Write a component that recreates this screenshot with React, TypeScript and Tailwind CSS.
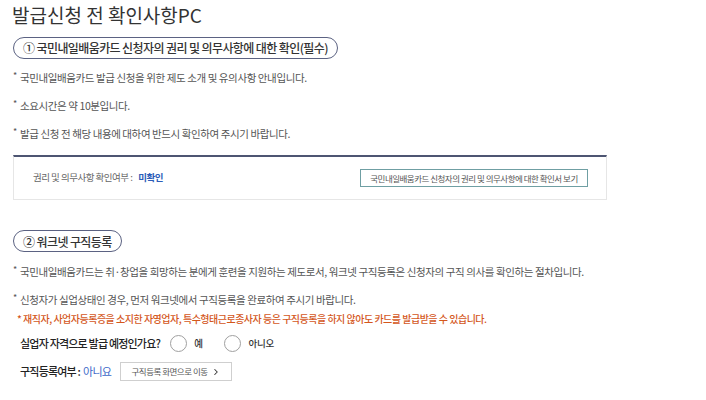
import { ChevronRight } from 'lucide-react';

const font = { fontFamily: '"Noto Sans CJK KR", "Noto Sans", sans-serif' };

const Pill = ({ children }: { children: string }) => (
  <div className="inline-flex items-center h-[22px] px-[9px] rounded-full border-[1.5px] border-[#5b6282] text-[12px] tracking-[-0.6px] leading-[19px] font-medium text-[#333]">
    {children}
  </div>
);

const Bullet = ({ children }: { children: string }) => (
  <div className="flex items-start text-[10.5px] tracking-[-0.4px] leading-[17px] text-[#555]">
    <span className="w-[7px] text-[9px] leading-[14px]">*</span>
    <span>{children}</span>
  </div>
);

export default function App() {
  return (
    <div className="w-[706px] h-[400px] bg-white overflow-hidden px-[13px]" style={font}>
      <h1 className="pt-[3px] text-[19px] leading-[24px] text-[#333] font-normal -ml-[1px]">발급신청 전 확인사항PC</h1>

      <div className="mt-[7px]">
        <Pill>① 국민내일배움카드 신청자의 권리 및 의무사항에 대한 확인(필수)</Pill>
      </div>
      <div className="mt-[10px] flex flex-col gap-[11px]">
        <Bullet>국민내일배움카드 발급 신청을 위한 제도 소개 및 유의사항 안내입니다.</Bullet>
        <Bullet>소요시간은 약 10분입니다.</Bullet>
        <Bullet>발급 신청 전 해당 내용에 대하여 반드시 확인하여 주시기 바랍니다.</Bullet>
      </div>

      <div className="mt-[13px] w-[594px] h-[45px] border border-[#e6e6e6] border-t-2 border-t-[#4d5572] flex items-center pl-[19px] pr-[18px] justify-between">
        <div className="text-[9.5px] tracking-[-0.5px] text-[#666] flex items-center">
          <span>권리 및 의무사항 확인여부 :</span>
          <span className="ml-[6px] font-bold text-[#2c5cb8]">미확인</span>
        </div>
        <button className="h-[18px] w-[228px] border border-[#6f9fa3] text-[8.5px] tracking-[-0.5px] leading-[14px] text-[#555] bg-white">
          국민내일배움카드 신청자의 권리 및 의무사항에 대한 확인서 보기
        </button>
      </div>

      <div className="mt-[28px]">
        <Pill>② 워크넷 구직등록</Pill>
      </div>
      <div className="mt-[11px] flex flex-col gap-[11px]">
        <Bullet>국민내일배움카드는 취·창업을 희망하는 분에게 훈련을 지원하는 제도로서, 워크넷 구직등록은 신청자의 구직 의사를 확인하는 절차입니다.</Bullet>
        <Bullet>신청자가 실업상태인 경우, 먼저 워크넷에서 구직등록을 완료하여 주시기 바랍니다.</Bullet>
      </div>
      <div className="mt-[2px] pl-[4px] text-[10px] tracking-[-0.5px] leading-[17px] font-medium text-[#d4571c]">
        * 재직자, 사업자등록증을 소지한 자영업자, 특수형태근로종사자 등은 구직등록을 하지 않아도 카드를 발급받을 수 있습니다.
      </div>

      <div className="mt-[7px] pl-[7px] flex items-center h-[18px] text-[11px] tracking-[-0.8px] font-medium text-[#222]">
        <span>실업자 자격으로 발급 예정인가요?</span>
        <span className="ml-[10px] w-[17px] h-[17px] rounded-full border border-[#a0a0a0] bg-white" />
        <span className="ml-[7px] text-[9.5px] tracking-[-0.3px] text-[#333]">예</span>
        <span className="ml-[21px] w-[17px] h-[17px] rounded-full border border-[#a0a0a0] bg-white" />
        <span className="ml-[8px] text-[9.5px] tracking-[-0.3px] text-[#333]">아니오</span>
      </div>

      <div className="mt-[10px] pl-[7px] flex items-center h-[19px] text-[11px] tracking-[-0.8px] font-medium text-[#222]">
        <span>구직등록여부 :</span>
        <span className="ml-[3px] font-normal text-[#3c68c8]">아니요</span>
        <button className="ml-[9px] h-[19px] w-[112px] border border-[#cfcfcf] bg-white text-[8.5px] tracking-[-0.5px] text-[#555] font-normal flex items-center justify-center gap-[3px]">
          구직등록 화면으로 이동
          <ChevronRight size={10} strokeWidth={2.5} className="text-[#333]" />
        </button>
      </div>
    </div>
  );
}
